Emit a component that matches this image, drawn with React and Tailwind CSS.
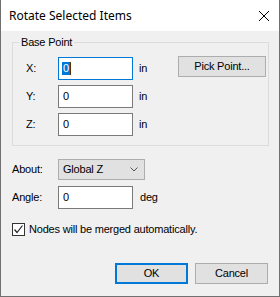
import { useState } from "react";

function Field({ label, value, unit, focused }) {
  return (
    <div className="flex items-center h-[23px]">
      <span className="w-[45px] pl-[13px]">{label}</span>
      <div
        className={
          "w-[75px] h-[23px] bg-white flex items-center pl-[3px] border " +
          (focused ? "border-[#0078d7]" : "border-[#7a7a7a]")
        }
      >
        {focused ? (
          <span className="flex items-center">
            <span className="bg-[#0078d7] text-white h-[13px] leading-[13px] px-px">{value}</span>
            <span className="w-px h-[13px] bg-[#5a2d00]"></span>
          </span>
        ) : (
          <span className="pl-px">{value}</span>
        )}
      </div>
      <span className="ml-[6px]">{unit}</span>
    </div>
  );
}

function App() {
  const [merge, setMerge] = useState(true);

  return (
    <div
      className="w-[280px] h-[297px] flex flex-col bg-white border-x border-b border-[#707070] text-black overflow-hidden"
      style={{ fontFamily: '"Liberation Sans", Arial, sans-serif' }}
    >
      <div className="h-[31px] flex items-center justify-between pl-[8px] pr-[9px] shrink-0">
        <span className="text-[12px]" style={{ fontFamily: '"Segoe UI", "Noto Sans", sans-serif' }}>
          Rotate Selected Items
        </span>
        <svg width="12" height="12" viewBox="0 0 12 12">
          <path d="M1 1 L11 11 M11 1 L1 11" stroke="#000" strokeWidth="1" fill="none" />
        </svg>
      </div>

      <div className="flex-1 bg-[#f0f0f0] pt-[11px] pl-[11px] pr-[10px] text-[11px] tracking-[-0.2px]">
        <div className="relative border border-[#dcdcdc] h-[104px] pt-[14px] flex">
          <span className="absolute -top-[7px] left-[6px] px-[2px] bg-[#f0f0f0] leading-[13px]">
            Base Point
          </span>
          <div className="flex flex-col gap-[5px] w-[160px]">
            <Field label="X:" value="0" unit="in" focused />
            <Field label="Y:" value="0" unit="in" />
            <Field label="Z:" value="0" unit="in" />
          </div>
          <button className="ml-[5px] -mt-[1px] w-[88px] h-[21px] bg-[#e1e1e1] border border-[#adadad] text-[11px] tracking-[-0.2px]">
            Pick Point...
          </button>
        </div>

        <div className="flex items-center mt-[13px] h-[21px]">
          <span className="w-[46px]">About:</span>
          <div className="w-[87px] h-[21px] bg-[#e1e1e1] border border-[#adadad] flex items-center justify-between pl-[4px] pr-[6px]">
            <span>Global Z</span>
            <svg width="8" height="5" viewBox="0 0 8 5">
              <path d="M0.5 0.5 L4 4 L7.5 0.5" stroke="#555" strokeWidth="1" fill="none" />
            </svg>
          </div>
        </div>

        <div className="flex items-center mt-[6px] h-[23px]">
          <span className="w-[46px]">Angle:</span>
          <div className="w-[75px] h-[23px] bg-white border border-[#7a7a7a] flex items-center pl-[4px]">0</div>
          <span className="ml-[7px]">deg</span>
        </div>

        <label className="flex items-center mt-[13px] h-[14px] cursor-default">
          <span
            onClick={() => setMerge(!merge)}
            className="w-[13px] h-[13px] bg-white border border-[#333] flex items-center justify-center"
          >
            {merge && (
              <svg width="11" height="11" viewBox="0 0 11 11">
                <path d="M1.5 5.5 L4 8.5 L9.5 1.5" stroke="#222" strokeWidth="1.2" fill="none" />
              </svg>
            )}
          </span>
          <span className="ml-[4px]">Nodes will be merged automatically.</span>
        </label>

        <div className="flex justify-end gap-[7px] mt-[27px] pr-[1px]">
          <button className="w-[73px] h-[21px] bg-[#e1e1e1] border-2 border-[#0078d7] text-[11px]">OK</button>
          <button className="w-[73px] h-[21px] bg-[#e1e1e1] border border-[#adadad] text-[11px] tracking-[-0.2px]">Cancel</button>
        </div>
      </div>
    </div>
  );
}

export default App;
